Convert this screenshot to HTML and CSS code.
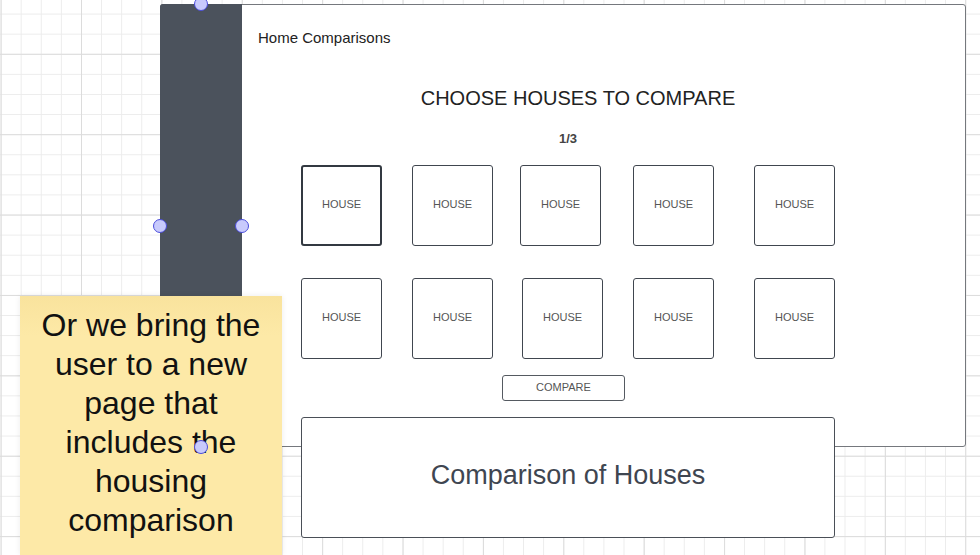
FILE: index.html
```html
<!DOCTYPE html>
<html lang="en">
<head>
    <meta charset="UTF-8">
    <meta name="viewport" content="width=device-width, initial-scale=1.0">
    <title>Home Comparisons - wireframe</title>
    <link rel="stylesheet" href="styles.css">
</head>
<body>
    <div class="canvas">

        <!-- app frame -->
        <div class="frame">
            <div class="sidebar"></div>
            <div class="main">
                <div class="app-title">Home Comparisons</div>
                <div class="picker">
                    <h1 class="heading">CHOOSE HOUSES TO COMPARE</h1>
                    <div class="step">1/3</div>
                    <div class="houses">
                        <div class="house selected">HOUSE</div>
                        <div class="house">HOUSE</div>
                        <div class="house">HOUSE</div>
                        <div class="house">HOUSE</div>
                        <div class="house">HOUSE</div>
                        <div class="house">HOUSE</div>
                        <div class="house">HOUSE</div>
                        <div class="house nudge">HOUSE</div>
                        <div class="house">HOUSE</div>
                        <div class="house">HOUSE</div>
                    </div>
                    <div class="compare-btn">COMPARE</div>
                </div>
            </div>
        </div>

        <div class="result">Comparison of Houses</div>

        <div class="sticky">Or we bring the user to a new page that includes the housing comparison</div>

        <!-- selection handles of the sidebar shape -->
        <span class="handle h-top"></span>
        <span class="handle h-left"></span>
        <span class="handle h-right"></span>
        <span class="handle h-bottom"></span>
    </div>
</body>
</html>
```

FILE: styles.css
```css
body {
    margin: 0;
    font-family: "Liberation Sans", Arial, sans-serif;
    color: #333;
}

.canvas {
    position: relative;
    width: 980px;
    height: 555px;
    overflow: hidden;
    background-color: #fff;
    background-image:
        linear-gradient(to right, #dcdcdc 1px, transparent 1px),
        linear-gradient(to bottom, #dcdcdc 1px, transparent 1px),
        linear-gradient(to right, #ececec 1px, transparent 1px),
        linear-gradient(to bottom, #ececec 1px, transparent 1px);
    background-size: 80.4px 80.4px, 80.4px 80.4px, 20.1px 20.1px, 20.1px 20.1px;
    background-position: 0.6px 0, 0 53.8px, 0.6px 0, 0 13.6px;
}

/* app frame */
.frame {
    position: absolute;
    left: 160px;
    top: 4px;
    width: 806px;
    height: 443px;
    box-sizing: border-box;
    border: 1px solid #75787d;
    border-radius: 3px;
    background: #fff;
    display: flex;
}

.sidebar {
    width: 82px;
    margin: -1px 0 -1px -1px;
    background: #4b525c;
    border-radius: 3px 0 0 3px;
}

.main {
    flex: 1;
    padding: 24px 0 0 16px;
}

.app-title {
    font-size: 15px;
    line-height: 18px;
    color: #222;
}

.picker {
    width: 534px;
    margin-left: 43px;
}

.heading {
    margin: 39px 0 0;
    padding-left: 20px;
    font-size: 20px;
    font-weight: normal;
    line-height: 24px;
    text-align: center;
    color: #222;
}

.step {
    margin-top: 21px;
    font-size: 13px;
    font-weight: bold;
    line-height: 16px;
    text-align: center;
    color: #444;
}

/* each column holds the gap before its box; boxes sit at the column end */
.houses {
    margin-top: 18px;
    display: grid;
    grid-template-columns: 81px 111px 108px 113px 121px;
    row-gap: 32px;
}

.house {
    justify-self: end;
    width: 81px;
    height: 81px;
    box-sizing: border-box;
    padding-bottom: 3px;
    border: 1px solid #40464f;
    border-radius: 3px;
    display: flex;
    align-items: center;
    justify-content: center;
    font-size: 11px;
    color: #555;
}

.house.selected {
    border: 2px solid #333941;
}

.house.nudge {
    margin-right: -2px;
}

.compare-btn {
    width: 123px;
    height: 26px;
    box-sizing: border-box;
    margin: 16px 0 0 201px;
    padding-bottom: 2px;
    border: 1px solid #555a61;
    border-radius: 3px;
    display: flex;
    align-items: center;
    justify-content: center;
    font-size: 11px;
    color: #555;
}

/* result shape */
.result {
    position: absolute;
    left: 301px;
    top: 417px;
    width: 534px;
    height: 121px;
    box-sizing: border-box;
    border: 1px solid #4a4f57;
    border-radius: 3px;
    background: #fff;
    display: flex;
    align-items: center;
    justify-content: center;
    padding-bottom: 4px;
    font-size: 27px;
    color: #3f4651;
}

/* sticky note */
.sticky {
    position: absolute;
    left: 20px;
    top: 296px;
    width: 262px;
    height: 259px;
    box-sizing: border-box;
    padding: 10px 8px 0;
    background: linear-gradient(to bottom, #f9e39d, #fde9a7 40px);
    box-shadow: 0 0 6px rgba(0, 0, 0, 0.08);
    font-size: 32px;
    line-height: 39px;
    text-align: center;
    color: #111;
}

.handle {
    position: absolute;
    width: 12px;
    height: 12px;
    margin: -7px 0 0 -7px;
    border: 1px solid #4b4ddb;
    border-radius: 50%;
    background: #c8cafc;
}

.h-top { left: 201px; top: 4px; }
.h-left { left: 160px; top: 226px; }
.h-right { left: 242px; top: 226px; }
.h-bottom { left: 201px; top: 447px; }
```
